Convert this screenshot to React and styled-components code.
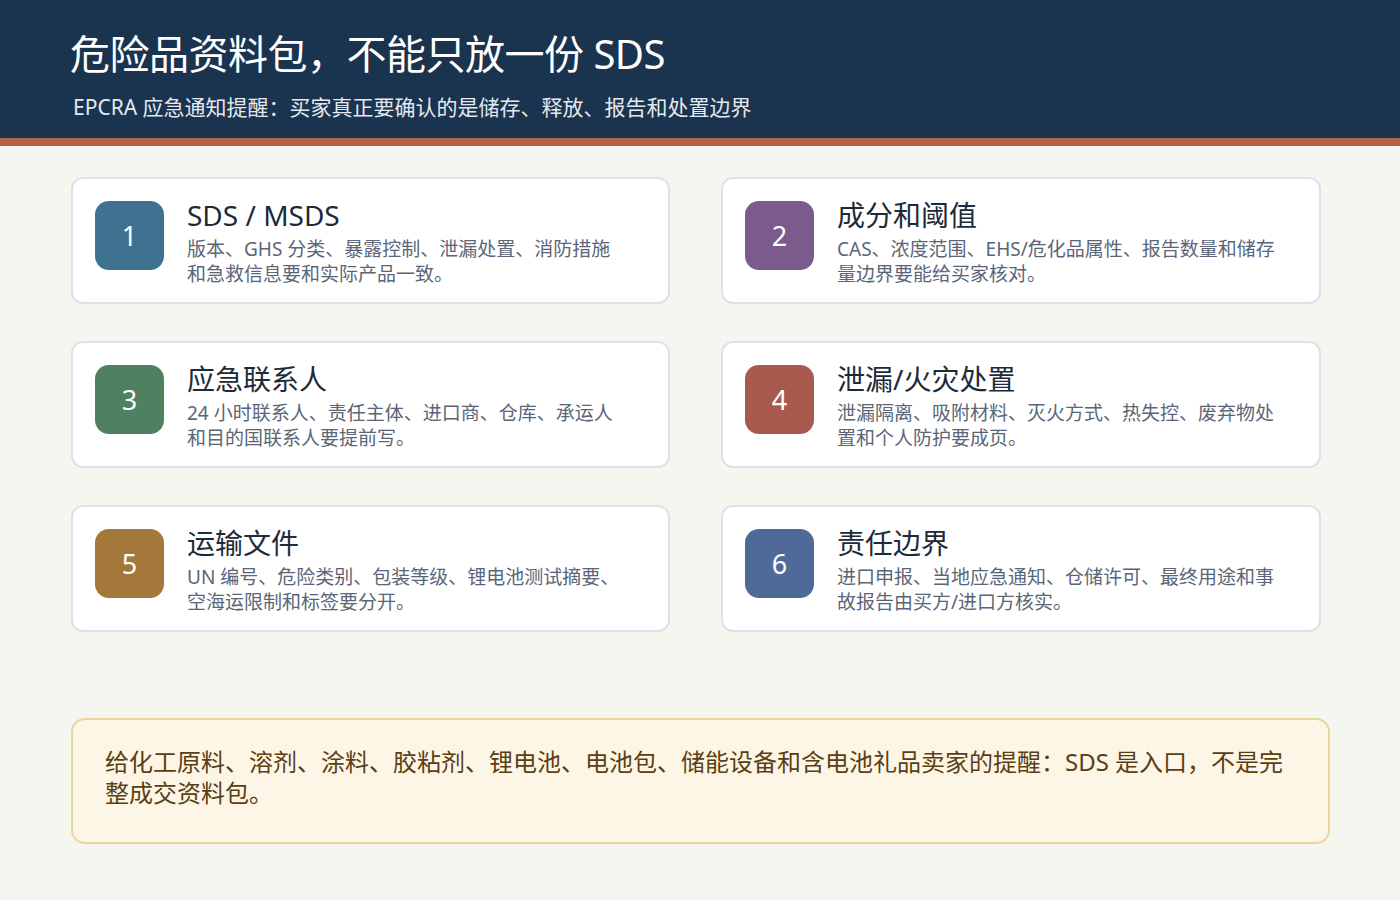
import React from "react";
import styled, { createGlobalStyle } from "styled-components";

const Global = createGlobalStyle`
  body { margin: 0; background: #f6f6f1; font-family: "Noto Sans", "Noto Sans CJK SC", sans-serif; }
`;

const Page = styled.div`
  width: 1400px;
  height: 900px;
  background: #f6f6f1;
`;

const Header = styled.header`
  background: #1a334f;
  border-bottom: 8px solid #b36446;
  padding: 28px 70px 0;
  height: 110px;
  box-sizing: content-box;
  color: #fff;
`;

const Title = styled.h1`
  margin: 0;
  font-size: 40px;
  font-weight: 400;
  line-height: 52px;
  letter-spacing: -0.5px;
`;

const Subtitle = styled.div`
  margin-top: 12px;
  font-size: 21px;
  line-height: 30px;
  color: #e4e9f0;
  padding-left: 3px;
`;

const Grid = styled.div`
  display: grid;
  grid-template-columns: 599px 600px;
  column-gap: 51px;
  row-gap: 37px;
  padding: 31px 71px 0;
`;

const Card = styled.div`
  display: flex;
  gap: 23px;
  height: 127px;
  box-sizing: border-box;
  padding: 22px 22px;
  background: #fff;
  border: 2px solid #dde1e8;
  border-radius: 12px;
`;

const Badge = styled.div`
  flex: 0 0 69px;
  height: 69px;
  border-radius: 14px;
  background: ${(p) => p.$color};
  color: #fff;
  font-size: 27px;
  display: flex;
  align-items: center;
  justify-content: center;
`;

const Body = styled.div`
  display: flex;
  flex-direction: column;
`;

const CardTitle = styled.div`
  font-size: 28px;
  line-height: 28px;
  color: #1c2a3a;
  margin-top: 0px;
`;

const Desc = styled.div`
  margin-top: 8px;
  font-size: 19px;
  line-height: 25px;
  color: #5a6677;
  max-width: 440px;
`;

const Note = styled.div`
  margin: 86px 70px 0 71px;
  height: 126px;
  box-sizing: border-box;
  padding: 26px 32px;
  background: #fdf6e7;
  border: 2px solid #e9d59e;
  border-radius: 14px;
  color: #5a3f12;
  font-size: 24px;
  line-height: 31px;
`;

const items = [
  ["1", "#3e7290", "SDS / MSDS", "版本、GHS 分类、暴露控制、泄漏处置、消防措施和急救信息要和实际产品一致。"],
  ["2", "#7b5a8c", "成分和阈值", "CAS、浓度范围、EHS/危化品属性、报告数量和储存量边界要能给买家核对。"],
  ["3", "#4f8060", "应急联系人", "24 小时联系人、责任主体、进口商、仓库、承运人和目的国联系人要提前写。"],
  ["4", "#a85a4e", "泄漏/火灾处置", "泄漏隔离、吸附材料、灭火方式、热失控、废弃物处置和个人防护要成页。"],
  ["5", "#a4773a", "运输文件", "UN 编号、危险类别、包装等级、锂电池测试摘要、空海运限制和标签要分开。"],
  ["6", "#4f6a98", "责任边界", "进口申报、当地应急通知、仓储许可、最终用途和事故报告由买方/进口方核实。"],
];

export default function App() {
  return (
    <Page>
      <Global />
      <Header>
        <Title>危险品资料包，不能只放一份 SDS</Title>
        <Subtitle>EPCRA 应急通知提醒：买家真正要确认的是储存、释放、报告和处置边界</Subtitle>
      </Header>
      <Grid>
        {items.map(([n, c, t, d]) => (
          <Card key={n}>
            <Badge $color={c}>{n}</Badge>
            <Body>
              <CardTitle>{t}</CardTitle>
              <Desc>{d}</Desc>
            </Body>
          </Card>
        ))}
      </Grid>
      <Note>给化工原料、溶剂、涂料、胶粘剂、锂电池、电池包、储能设备和含电池礼品卖家的提醒：SDS 是入口，不是完整成交资料包。</Note>
    </Page>
  );
}
